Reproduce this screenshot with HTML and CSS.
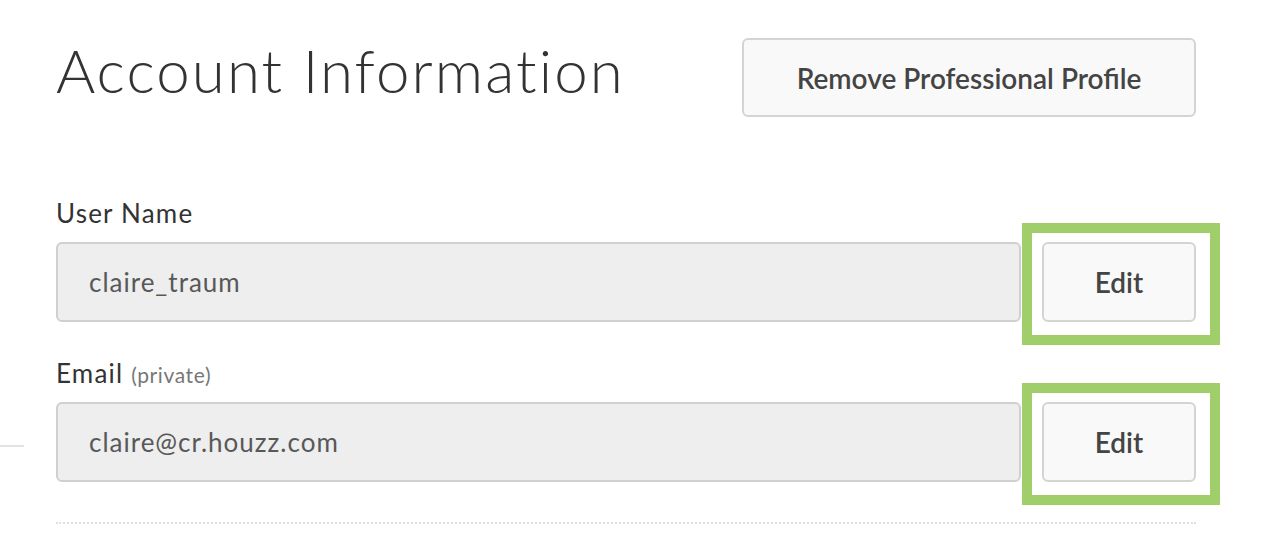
FILE: index.html
```html
<!DOCTYPE html>
<html lang="en">
<head>
    <meta charset="UTF-8">
    <title>Account Information</title>
    <link rel="stylesheet" href="styles.css">
</head>
<body>
    <div class="account">
        <header class="account-header">
            <h1>Account Information</h1>
            <button class="btn btn-remove">Remove Professional Profile</button>
        </header>

        <!-- User name -->
        <div class="field">
            <label class="field-label">User Name</label>
            <div class="field-row">
                <div class="gutter"></div>
                <div class="field-value">claire_traum</div>
                <div class="edit-wrap">
                    <button class="btn btn-edit">Edit</button>
                    <span class="highlight"></span>
                </div>
            </div>
        </div>

        <!-- Email -->
        <div class="field">
            <label class="field-label">Email <span class="hint">(private)</span></label>
            <div class="field-row">
                <div class="gutter"><span class="side-rule"></span></div>
                <div class="field-value">claire@cr.houzz.com</div>
                <div class="edit-wrap">
                    <button class="btn btn-edit">Edit</button>
                    <span class="highlight"></span>
                </div>
            </div>
        </div>

        <div class="divider"></div>
    </div>
</body>
</html>
```

FILE: styles.css
```css
body {
    margin: 0;
    padding: 0;
    background-color: #fff;
    color: #333;
    font-family: 'Lato', 'Open Sans', sans-serif;
}

.account {
    width: 1196px;
    padding-top: 38px;
}

/* Header */
.account-header {
    display: flex;
    justify-content: space-between;
    align-items: flex-start;
    padding-left: 56px;
}

.account-header h1 {
    margin: 2px 0 0;
    font-size: 60px;
    line-height: 60px;
    font-weight: 300;
    color: #333;
    letter-spacing: 2.1px;
}

.btn {
    font-family: inherit;
    background-color: #f9f9f9;
    border: 2px solid #d4d4d4;
    border-radius: 6px;
    color: #444;
    font-weight: 600;
    cursor: pointer;
}

.btn-remove {
    width: 454px;
    height: 79px;
    font-size: 28px;
}

/* Fields */
.field {
    margin-top: 81px;
}

.field + .field {
    margin-top: 36px;
}

.field-label {
    display: block;
    height: 30px;
    padding-left: 56px;
    margin-bottom: 14px;
    font-size: 26px;
    line-height: 30px;
    letter-spacing: 1.2px;
    color: #333;
}

.field-label .hint {
    font-size: 21px;
    line-height: 1;
    letter-spacing: 0.6px;
    color: #777;
}

.field-row {
    display: flex;
    align-items: stretch;
}

.gutter {
    width: 56px;
    flex: 0 0 56px;
    display: flex;
    align-items: center;
}

.side-rule {
    display: block;
    width: 24px;
    height: 2px;
    margin-top: 8px;
    background-color: #e2e2e2;
}

.field-value {
    flex: 1;
    height: 80px;
    box-sizing: border-box;
    display: flex;
    align-items: center;
    padding-left: 31px;
    background-color: #eeeeee;
    border: 2px solid #d0d0d0;
    border-radius: 6px;
    font-size: 26px;
    letter-spacing: 1px;
    color: #585858;
}

.edit-wrap {
    position: relative;
    margin-left: 21px;
}

.btn-edit {
    width: 154px;
    height: 80px;
    font-size: 28px;
}

/* green annotation box around the edit buttons */
.highlight {
    position: absolute;
    top: -19px;
    left: -20px;
    width: 198px;
    height: 122px;
    box-sizing: border-box;
    border: 10px solid #a0ce6a;
    pointer-events: none;
}

.divider {
    margin: 40px 0 0 56px;
    border-top: 2px dotted #e0e0e0;
}
```
